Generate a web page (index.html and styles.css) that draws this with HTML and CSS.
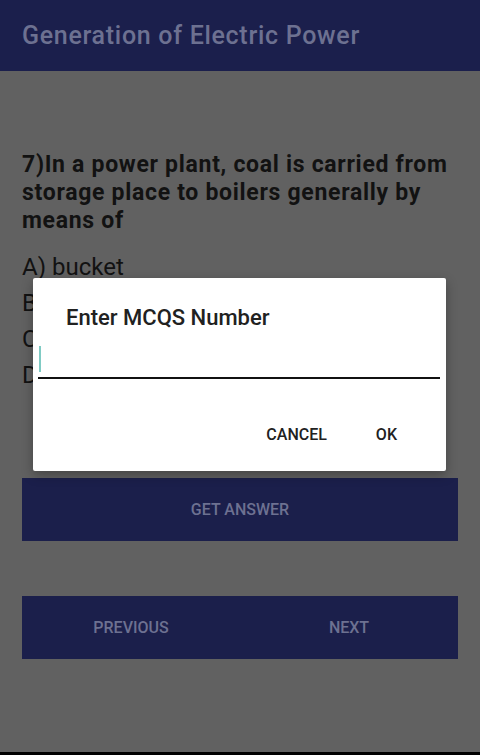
FILE: index.html
```html
<!DOCTYPE html>
<html lang="en">
  <head>
    <meta charset="UTF-8" />
    <meta name="viewport" content="width=device-width, initial-scale=1.0" />
    <title>Generation of Electric Power</title>
    <link rel="stylesheet" href="styles.css">
  </head>
  <body>
    <header class="app-bar">
      <h1>Generation of Electric Power</h1>
    </header>
    <main class="quiz">
      <p class="question">7)In a power plant, coal is carried from storage place to boilers generally by means of</p>
      <ul class="options">
        <li>A) bucket</li>
        <li>B) belt conveyor</li>
        <li>C) trolleys</li>
        <li>D) manually</li>
      </ul>
      <button class="btn btn-answer">GET ANSWER</button>
      <div class="nav-bar">
        <button class="btn">PREVIOUS</button>
        <button class="btn">NEXT</button>
      </div>
    </main>
    <div class="footer-strip"></div>

    <!-- dialogen ligger ovanpå sidan -->
    <div class="dialog">
      <h2 class="dialog-title">Enter MCQS Number</h2>
      <div class="dialog-input"><span class="caret"></span></div>
      <div class="dialog-actions">
        <span class="action">CANCEL</span>
        <span class="action">OK</span>
      </div>
    </div>
  </body>
</html>
```

FILE: styles.css
```css
body {
  margin: 0;
  height: 755px;
  display: flex;
  flex-direction: column;
  position: relative;
  background: #616161;
  font-family: Roboto, "Liberation Sans", sans-serif;
  overflow: hidden;
}
.app-bar {
  height: 71px;
  background: #1b1f4c;
  display: flex;
  align-items: center;
  padding: 0 22px;
  flex-shrink: 0;
}
.app-bar h1 {
  margin: 0;
  font-size: 25px;
  letter-spacing: 0.7px;
  font-weight: 500;
  color: #6d7191;
}
.quiz {
  flex: 1;
  padding: 80px 22px 0;
}
.question {
  margin: 0;
  font-size: 23px;
  letter-spacing: 0.7px;
  line-height: 28px;
  font-weight: 700;
  color: #121212;
}
.options {
  list-style: none;
  margin: 14px 0 0;
  padding: 0;
  font-size: 24px;
  line-height: 36px;
  color: #121212;
}
.btn {
  border: 0;
  background: #1b1f4b;
  color: #6d7191;
  font-family: inherit;
  font-size: 16px;
  font-weight: 500;
  height: 63px;
  padding: 0;
}
.btn-answer {
  display: block;
  width: 100%;
  margin-top: 85px;
}
.nav-bar {
  display: flex;
  margin-top: 55px;
  background: #1b1f4b;
}
.nav-bar .btn {
  flex: 1;
}
.footer-strip {
  height: 3px;
  background: #000;
  flex-shrink: 0;
}
.dialog {
  position: absolute;
  left: 33px;
  top: 278px;
  width: 413px;
  height: 193px;
  background: #fff;
  border-radius: 2px;
  box-sizing: border-box;
  padding: 26px 6px 0 5px;
  box-shadow: 0 4px 12px rgba(0, 0, 0, 0.3);
}
.dialog-title {
  margin: 0 0 0 28px;
  font-size: 22px;
  line-height: 28px;
  font-weight: 500;
  color: #212121;
}
.dialog-input {
  height: 47px;
  border-bottom: 2px solid #111;
  display: flex;
  align-items: flex-end;
  padding-bottom: 5px;
  box-sizing: border-box;
}
.caret {
  width: 2px;
  height: 26px;
  margin-left: 1px;
  background: #80cbc4;
}
.dialog-actions {
  display: flex;
  justify-content: flex-end;
  gap: 49px;
  padding: 46px 43px 0 0;
}
.action {
  font-size: 16px;
  font-weight: 500;
  color: #212121;
}
```
